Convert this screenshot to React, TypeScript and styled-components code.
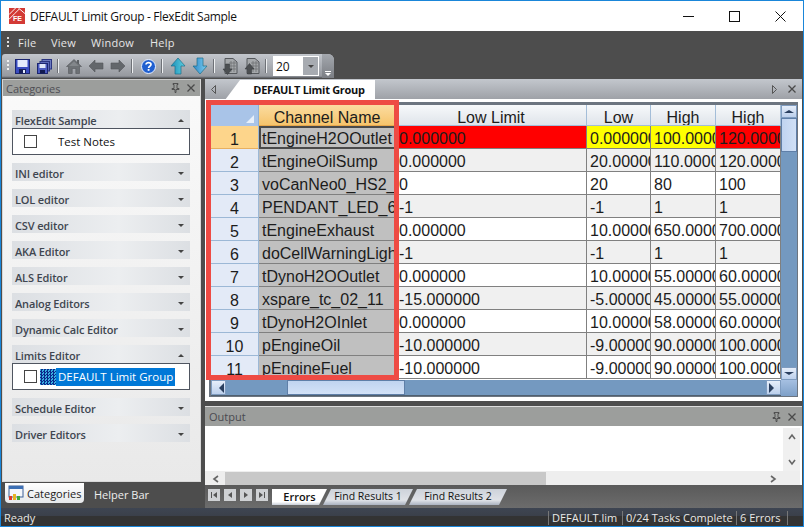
import React from "react";
import styled, { createGlobalStyle } from "styled-components";

const Global = createGlobalStyle`
  * { box-sizing: border-box; }
  html, body { margin: 0; padding: 0; background: #4d4d4d; }
`;
const ui = `"Open Sans", "Noto Sans", sans-serif`;
const gridFont = `"Liberation Sans", Arial, sans-serif`;

const Window = styled.div`
  width: 804px; height: 527px; border: 1px solid #1a86d9; display: flex; flex-direction: column;
  background: #4d4d4d; overflow: hidden; font-family: ${ui};
`;
const TitleBar = styled.div`
  height: 30px; background: #fff; display: flex; align-items: center; padding-left: 8px; flex: none;
`;
const TitleText = styled.div`font-size: 12px; color: #111; margin-left: 5px; flex: 1; letter-spacing: -0.32px;`;
const WinButton = styled.div`width: 46px; height: 30px; display: flex; align-items: center; justify-content: center;`;

const MenuBar = styled.div`
  height: 23px; display: flex; align-items: center; padding-left: 4px; color: #e6e6e6; font-size: 11px; flex: none; letter-spacing: 0.25px;
`;
const Grip = styled.div<{ $c?: string }>`
  width: 2px; height: 12px; margin: 0 ${p => (p.$c ? "2px" : "2px")} 0 2px;
  background: repeating-linear-gradient(${p => p.$c || "#ddd"} 0 2px, transparent 2px 4px);
`;
const MenuItem = styled.div<{ $w: number }>`width: ${p => p.$w}px; padding-left: 7px;`;

const Toolbar = styled.div`
  width: 332px; height: 24px; margin-left: 1px; border-radius: 3px 6px 0 0; display: flex; align-items: center;
  padding-left: 3px; flex: none; background: linear-gradient(#c2c6cc, #96999f 92%, #55585e); position: relative;
`;
const ToolButton = styled.div`width: 22px; height: 20px; display: flex; align-items: center; justify-content: center;`;
const Sep = styled.div`width: 1px; height: 14px; background: #eef0f2; box-shadow: -1px 0 0 #6e7177; margin: 0 4px 0 3px;`;
const Combo = styled.div`
  width: 46px; height: 20px; margin-left: 2px; background: #fff; display: flex; font: 12px ${ui}; color: #111;
  align-items: center; padding-left: 3px; justify-content: space-between;
`;
const ComboBtn = styled.div`width: 15px; height: 18px; margin-right: 1px; background: #a7abb1; display: flex; align-items: center; justify-content: center;`;
const Tri = styled.div<{ $dir?: string; $c?: string; $s?: number }>`
  width: 0; height: 0; flex: none;
  border-left: ${p => p.$s ?? 3}px solid ${p => (p.$dir === "r" ? p.$c || "#444" : "transparent")};
  border-right: ${p => p.$s ?? 3}px solid ${p => (p.$dir === "l" ? p.$c || "#444" : "transparent")};
  border-top: ${p => (p.$dir === "u" ? 0 : p.$dir === "d" ? 3 : p.$s ?? 3)}px solid ${p => (p.$dir === "d" ? p.$c || "#444" : "transparent")};
  border-bottom: ${p => (p.$dir === "d" ? 0 : p.$dir === "u" ? 3 : p.$s ?? 3)}px solid ${p => (p.$dir === "u" ? p.$c || "#444" : "transparent")};
`;
const ToolEnd = styled.div`
  margin-left: auto; width: 12px; height: 24px; background: linear-gradient(#a4a8ae, #7b7e84); border-radius: 0 6px 0 0;
  display: flex; flex-direction: column; align-items: center; justify-content: flex-end; padding-bottom: 2px; gap: 1px;
`;
const EndLine = styled.div`width: 6px; height: 1px; background: #fff;`;

const Main = styled.div`flex: 1; display: flex; min-height: 0; padding-top: 1px;`;
const LeftCol = styled.div`width: 204px; flex: none; display: flex; flex-direction: column; padding-left: 1px;`;
const Panel = styled.div`
  width: 199px; height: 403px; display: flex; flex-direction: column; border: 1px solid #d8d8d8; border-top-color: #c8c8c8;
  background: linear-gradient(#fafafa, #e9e9e9);
`;
const PanelHead = styled.div`
  height: 16px; background: #9c9e9c; display: flex; align-items: center; font-size: 11px; color: #4f4f55;
  padding: 0 1px 0 3px; flex: none;
`;
const HeadLabel = styled.div`flex: 1;`;
const HeadIcon = styled.div`width: 16px; display: flex; justify-content: center; align-items: center;`;
const Sections = styled.div`padding: 14px 10px 0 9px; display: flex; flex-direction: column; gap: 8px;`;
const Section = styled.div``;
const SectionHead = styled.div`
  height: 18px; display: flex; align-items: center; justify-content: space-between; padding: 3px 6px 0 3px;
  background: linear-gradient(90deg, #dcdfe3, #eceef0 60%, #dcdfe3); font: 600 11px ${ui}; color: #3f4650; letter-spacing: -0.15px;
`;
const SectionBox = styled.div`
  height: 27px; background: #fff; border: 1px solid #4f5560; display: flex; align-items: center; padding-left: 11px;
  font-size: 11.5px; color: #111;
`;
const CheckBox = styled.div`width: 13px; height: 13px; border: 1px solid #444; background: #fff; flex: none;`;
const Plain = styled.div`margin-left: 21px;`;
const Selected = styled.div`background: #0078d7; color: #fff; padding: 0 2px 0 2px; height: 18px; line-height: 18px; white-space: nowrap;`;
const Checker = styled.div`
  width: 16px; height: 16px; flex: none; margin-left: 3px;
  background: repeating-conic-gradient(#0b2a8c 0 25%, #39b0e0 0 50%) 0 0 / 3px 3px;
`;
const LeftTabs = styled.div`height: 24px; display: flex; align-items: center; padding-left: 3px; font-size: 11px; color: #eee;`;
const LeftTabOn = styled.div`
  width: 79px; height: 20px; background: linear-gradient(#fff, #e6e8ea); color: #222; display: flex; align-items: center; gap: 3px;
  padding-left: 3px; border-radius: 0 0 4px 4px; margin-right: 10px; margin-top: -2px;
`;

const RightCol = styled.div`width: 597px; flex: none; display: flex; flex-direction: column;`;
const Doc = styled.div`height: 322px; flex: none; background: #fff; position: relative; display: flex; flex-direction: column;`;
const TabStrip = styled.div`
  height: 20px; flex: none; background: linear-gradient(#c3c7cd, #9ea1a7); display: flex; align-items: center; position: relative; padding-left: 6px;
`;
const DocTab = styled.div`
  position: absolute; left: 20px; bottom: -1px; width: 150px; height: 20px; background: #fff; display: flex; align-items: center; justify-content: center;
  padding: 0 0 2px 18px; font: 700 11px ${ui}; color: #111; letter-spacing: -0.3px; clip-path: polygon(0 100%, 15px 0, 100% 0, 100% 100%);
`;
const StripRight = styled.div`margin-left: auto; display: flex; align-items: center; gap: 11px; padding-right: 6px;`;
const Frame = styled.div`
  margin: 3px 4px 0 4px; width: 589px; height: 295px; border: 2px solid #6c7580; border-top-width: 3px; border-bottom-width: 1px; border-right-width: 1px;
  display: grid; grid-template-columns: 570px 16px; grid-template-rows: 275px 16px; background: #fff;
`;
const Table = styled.div`
  display: grid; grid-template-columns: 48px 137px 191px 64px 65px 65px; grid-template-rows: 21px repeat(11, 23px);
  overflow: hidden; font-family: ${gridFont}; font-size: 16px; color: #1c1c1c;
`;
const Corner = styled.div`
  background: #a9c4e8; border-right: 1px solid #8fb0d4; position: relative;
  &::after { content: ""; position: absolute; right: 4px; bottom: 3px; border-left: 8px solid transparent; border-bottom: 8px solid #e8f0fa; }
`;
const ColHead = styled.div<{ $on?: boolean }>`
  background: ${p => (p.$on ? "linear-gradient(#fbdca0, #f6c46c)" : "linear-gradient(#f7f9fb, #dfe4ea)")};
  border-right: 1px solid #a3bdd8; border-bottom: 1px solid ${p => (p.$on ? "#e8a84c" : "#a3bdd8")};
  display: flex; align-items: center; justify-content: center; white-space: nowrap; overflow: hidden; padding-top: 5px;
`;
const RowHead = styled.div<{ $on?: boolean }>`
  background: ${p => (p.$on ? "#fdd58b" : "#e3eaf7")}; border-right: 1px solid #9cb8d6; border-bottom: 1px solid ${p => (p.$on ? "#e8b060" : "#9cb8d6")};
  display: flex; align-items: center; justify-content: center; padding-top: 6px;
`;
const Cell = styled.div<{ $bg: string; $active?: boolean }>`
  background: ${p => p.$bg}; border-right: 1px solid #808080; border-bottom: 1px solid #808080;
  padding-left: ${p => (p.$active ? "1px" : "3px")}; white-space: nowrap; overflow: hidden; line-height: 26px;
  ${p => p.$active ? "border: 2px solid #4a4a4a; border-right-width: 1px; line-height: 22px;" : ""}
`;
const VBar = styled.div`
  background: #7499c0; display: flex; flex-direction: column; justify-content: space-between; position: relative;
`;
const SBtn = styled.div`
  height: 13px; background: linear-gradient(#e6eefa, #bcd0ec); border: 1px solid #7f9cc0; display: flex; align-items: center; justify-content: center; flex: none;
`;
const VThumb = styled.div`
  position: absolute; left: 0; right: 0; top: 13px; height: 34px; background: linear-gradient(90deg, #c0d4f0, #d0e0f6);
  border: 1px solid #5f7fa8;
`;
const HBar = styled.div`background: #7499c0; display: flex; justify-content: space-between; position: relative; border-bottom: 1px solid #4f6070;`;
const HBtn = styled.div`
  width: 15px; background: linear-gradient(#e6eefa, #bcd0ec); border: 1px solid #7f9cc0; display: flex; align-items: center; justify-content: center; flex: none;
`;
const HThumb = styled.div`
  position: absolute; left: 76px; width: 118px; top: 0; bottom: 0; background: linear-gradient(#c0d4f0, #d3e2f7); border: 1px solid #5f7fa8;
`;
const GridCorner = styled.div`background: linear-gradient(#a6c0e2, #7ea0c8);`;
const RedBox = styled.div`
  position: absolute; left: 1px; top: 21px; width: 193px; height: 280px; border: 5px solid #ee4b44; pointer-events: none;
`;

const Gap = styled.div`height: 5px; flex: none;`;
const Output = styled.div`height: 79px; flex: none; background: #fff; display: flex; flex-direction: column; border-top: 1px solid #ddd;`;
const OutHead = styled(PanelHead)`height: 19px; padding: 0 2px 0 4px; font-size: 11px; color: #4a4a50;`;
const OutBody = styled.div`
  flex: 1; display: grid; grid-template-columns: 578px 17px; grid-template-rows: 43px 16px; padding-top: 2px;
`;
const OutMain = styled.div`background: #fff;`;
const OutV = styled.div`background: #f0f0f0; display: flex; flex-direction: column; justify-content: space-between; align-items: center; padding: 5px 0;`;
const OutH = styled.div`background: #eee; display: flex; align-items: center; padding-left: 7px; gap: 5px; grid-column: 1 / 3; padding-right: 23px;`;
const OutThumb = styled.div`width: 321px; height: 15px; background: #c8c8c8;`;
const OutFill = styled.div`flex: 1;`;
const BotTabs = styled.div`
  flex: 1; display: flex; align-items: flex-start; padding: 4px 0 0 3px; background: linear-gradient(#5a5a5a, #6c6c6c);
`;
const NavBtn = styled.div`
  width: 12px; height: 12px; margin-right: 4px; background: #cfd1d4; display: flex; align-items: center; justify-content: center; flex: none;
`;
const BotTab = styled.div<{ $on?: boolean; $w: number }>`
  width: ${p => p.$w}px; height: 16px; margin-right: -4px; display: flex; align-items: center; justify-content: center; color: #111; padding-bottom: 2px;
  font-size: ${p => (p.$on ? "11px" : "10.5px")};
  font-weight: ${p => (p.$on ? 600 : 400)};
  background: ${p => (p.$on ? "linear-gradient(#fff 80%, #c6ccd6)" : "linear-gradient(#cdd2da, #dfe2e7 70%, #aab2c0)")};
  clip-path: polygon(0 100%, ${p => (p.$on ? "0 0" : "8px 0")}, 100% 0, calc(100% - 8px) 100%);
`;
const Status = styled.div`
  height: 18px; flex: none; display: flex; align-items: center; color: #e8e8e8; font-size: 11px; padding-left: 3px;
  background: linear-gradient(#3e4552, #3b404a 8px, #333 8px);
`;
const StatusLabel = styled.div`flex: 1;`;
const StatusPane = styled.div<{ $w: number }>`
  width: ${p => p.$w}px; border-left: 1px solid #777; height: 14px; line-height: 14px; padding-left: 3px; white-space: nowrap; margin-top: 2px;
`;

const rows: [string, string, string, string, string][] = [
  ["tEngineH2OOutlet", "0.000000", "0.000000", "100.000000", "120.000000"],
  ["tEngineOilSump", "0.000000", "20.000000", "110.000000", "120.000000"],
  ["voCanNeo0_HS2_Status", "0", "20", "80", "100"],
  ["PENDANT_LED_6", "-1", "-1", "1", "1"],
  ["tEngineExhaust", "0.000000", "10.000000", "650.000000", "700.000000"],
  ["doCellWarningLight", "-1", "-1", "1", "1"],
  ["tDynoH2OOutlet", "0.000000", "10.000000", "55.000000", "60.000000"],
  ["xspare_tc_02_11", "-15.000000", "-5.000000", "45.000000", "55.000000"],
  ["tDynoH2OInlet", "0.000000", "10.000000", "58.000000", "60.000000"],
  ["pEngineOil", "-10.000000", "-9.000000", "90.000000", "100.000000"],
  ["pEngineFuel", "-10.000000", "-9.000000", "90.000000", "100.000000"],
];
const sections1 = ["INI editor", "LOL editor", "CSV editor", "AKA Editor", "ALS Editor", "Analog Editors", "Dynamic Calc Editor"];

const Arrow = ({ up, a, b }: { up?: boolean; a: string; b: string }) => (
  <svg width="16" height="18" viewBox="0 0 16 18">
    <defs><linearGradient id={up ? "au" : "ad"} x1="0" x2="1"><stop offset="0" stopColor={a} /><stop offset="1" stopColor={b} /></linearGradient></defs>
    <path transform={up ? undefined : "rotate(180 8 9)"} d="M8 1 L15 9 L11 9 L11 17 L5 17 L5 9 L1 9 Z" fill={`url(#${up ? "au" : "ad"})`} stroke="#1d6d8a" strokeWidth="0.7" />
  </svg>
);
const GrayArrow = ({ left }: { left?: boolean }) => (
  <svg width="16" height="14" viewBox="0 0 16 14">
    <path transform={left ? undefined : "rotate(180 8 7)"} d="M1 7 L7 1 L7 4 L15 4 L15 10 L7 10 L7 13 Z" fill="#63676b" stroke="#55585c" strokeWidth="0.6" />
  </svg>
);
const Floppy = () => (
  <svg width="15" height="15" viewBox="0 0 15 15">
    <rect x="0.5" y="0.5" width="14" height="14" fill="#3a4cc0" stroke="#1c2670" />
    <rect x="2.5" y="1" width="10" height="7" fill="#e4ebfc" />
    <rect x="4" y="10" width="7" height="4.5" fill="#161f58" />
    <rect x="8" y="11" width="2" height="3" fill="#e4ebfc" />
  </svg>
);
const FloppyAll = () => (
  <svg width="15" height="15" viewBox="0 0 15 15">
    <rect x="5" y="0.5" width="9.5" height="9.5" fill="#6c7ac0" stroke="#2a3480" />
    <rect x="3" y="2.5" width="9.5" height="9.5" fill="#5a68b8" stroke="#2a3480" />
    <rect x="0.5" y="4.5" width="10" height="10" fill="#4a5ac0" stroke="#1c2670" />
    <rect x="2.5" y="5" width="6" height="4" fill="#dfe6fa" />
    <rect x="3" y="11" width="5" height="3.5" fill="#111a50" />
  </svg>
);
const Home = () => (
  <svg width="16" height="15" viewBox="0 0 16 15">
    <rect x="11" y="1" width="2" height="4" fill="#5d6165" />
    <path d="M8 0.5 L15.5 7.5 L13.5 7.5 L13.5 14.5 L9.8 14.5 L9.8 9.5 L6.2 9.5 L6.2 14.5 L2.5 14.5 L2.5 7.5 L0.5 7.5 Z" fill="#6d7175" stroke="#55585c" strokeWidth="0.6" />
    <path d="M8 2.5 L13 7 L3 7 Z" fill="#83878b" />
  </svg>
);
const Help = () => (
  <svg width="15" height="15" viewBox="0 0 15 15">
    <circle cx="7.5" cy="7.5" r="7" fill="#1f5fd0" stroke="#e6eeff" strokeWidth="1" />
    <path d="M5 5.6 C5 2.9 10 2.9 10 5.6 C10 7.4 7.6 7.2 7.6 9" fill="none" stroke="#fff" strokeWidth="1.7" />
    <rect x="6.7" y="10" width="1.8" height="1.8" fill="#fff" />
  </svg>
);
const DocArrow = ({ up }: { up?: boolean }) => (
  <svg width="16" height="17" viewBox="0 0 16 17">
    <path d="M3 0.5 L11 0.5 L15 4 L15 15.5 L3 15.5 Z" fill="#a5a8ab" stroke="#55585c" />
    <path d="M7 5 H14 M7 8 H14 M7 11 H14 M9 3 V14 M12 3 V14" stroke="#6e7175" strokeWidth="0.8" />
    <path transform={up ? "rotate(180 5.5 11)" : undefined} d="M3.5 6 H7.5 V11 H10 L5.5 16.5 L1 11 H3.5 Z" fill="#4c4f52" stroke="#33363a" strokeWidth="0.5" />
  </svg>
);
const Pin = ({ c = "#4a4a4a" }: { c?: string }) => (
  <svg width="9" height="10" viewBox="0 0 9 10"><path d="M2 0.5 H7 V1.5 H6 V5.5 H8 V6.5 H5 V9.5 H4 V6.5 H1 V5.5 H3 V1.5 H2 Z" fill="none" stroke={c} strokeWidth="0.9" /></svg>
);
const Close = ({ c = "#4a4a4a", s = 8 }: { c?: string; s?: number }) => (
  <svg width={s} height={s} viewBox="0 0 8 8"><path d="M0.5 0.5 L7.5 7.5 M7.5 0.5 L0.5 7.5" stroke={c} strokeWidth="1.3" /></svg>
);
const StripArrow = ({ left }: { left?: boolean }) => (
  <svg width="5" height="9" viewBox="0 0 5 9"><path d={left ? "M4.5 0.5 L0.5 4.5 L4.5 8.5 Z" : "M0.5 0.5 L4.5 4.5 L0.5 8.5 Z"} fill="none" stroke="#555" /></svg>
);
const Chevron = ({ d }: { d: string }) => (
  <svg width="8" height="8" viewBox="0 0 8 8"><path d={d} fill="none" stroke="#666" strokeWidth="1.6" /></svg>
);
const NavGlyph = ({ d }: { d: string }) => (
  <svg width="8" height="8" viewBox="0 0 8 8"><path d={d} fill="#555" /></svg>
);
const Logo = () => (
  <svg width="16" height="16" viewBox="0 0 17 17">
    <rect width="17" height="17" fill="#d33a35" />
    <path d="M0 7 L7 0 M0 12 L6 6 L11 1 M10 0 L17 6" stroke="#fff" strokeWidth="1" fill="none" />
    <text x="9" y="14" fontSize="7.5" fontWeight="700" fill="#fff" textAnchor="middle" fontFamily="Liberation Sans">FE</text>
  </svg>
);
const ChartIcon = () => (
  <svg width="16" height="16" viewBox="0 0 16 16">
    <rect x="1" y="1" width="14" height="11" fill="#f4f6fa" stroke="#3c5f96" />
    <rect x="1" y="1" width="14" height="3" fill="#3c6fb4" />
    <rect x="1" y="11" width="3" height="4" fill="#d93a2b" />
    <rect x="5" y="9" width="3" height="6" fill="#e6b422" />
    <rect x="9" y="11" width="3" height="4" fill="#3ea83a" />
  </svg>
);

export default function App() {
  return (
    <Window>
      <Global />
      <TitleBar>
        <Logo />
        <TitleText>DEFAULT Limit Group - FlexEdit Sample</TitleText>
        <WinButton><svg width="11" height="11" viewBox="0 0 11 11"><path d="M0 5.5 H11" stroke="#111" /></svg></WinButton>
        <WinButton><svg width="11" height="11" viewBox="0 0 11 11"><rect x="0.5" y="0.5" width="10" height="10" fill="none" stroke="#111" /></svg></WinButton>
        <WinButton><svg width="11" height="11" viewBox="0 0 11 11"><path d="M0.5 0.5 L10.5 10.5 M10.5 0.5 L0.5 10.5" stroke="#111" /></svg></WinButton>
      </TitleBar>
      <MenuBar>
        <Grip />
        <MenuItem $w={33}>File</MenuItem>
        <MenuItem $w={40}>View</MenuItem>
        <MenuItem $w={59}>Window</MenuItem>
        <MenuItem $w={50}>Help</MenuItem>
      </MenuBar>
      <Toolbar>
        <Grip $c="#f0f0f0" />
        <ToolButton><Floppy /></ToolButton>
        <ToolButton><FloppyAll /></ToolButton>
        <Sep />
        <ToolButton><Home /></ToolButton>
        <ToolButton><GrayArrow left /></ToolButton>
        <ToolButton><GrayArrow /></ToolButton>
        <Sep />
        <ToolButton><Help /></ToolButton>
        <Sep />
        <ToolButton><Arrow up a="#1a8fb8" b="#5fd0e0" /></ToolButton>
        <ToolButton><Arrow a="#7fd0f0" b="#2a86c8" /></ToolButton>
        <Sep />
        <ToolButton><DocArrow /></ToolButton>
        <ToolButton><DocArrow up /></ToolButton>
        <Sep />
        <Combo>20<ComboBtn><Tri $dir="d" $c="#444" /></ComboBtn></Combo>
        <ToolEnd><EndLine /><Tri $dir="d" $c="#fff" /></ToolEnd>
      </Toolbar>
      <Main>
        <LeftCol>
          <Panel>
            <PanelHead>
              <HeadLabel>Categories</HeadLabel>
              <HeadIcon><Pin /></HeadIcon>
              <HeadIcon><Close /></HeadIcon>
            </PanelHead>
            <Sections>
              <Section>
                <SectionHead>FlexEdit Sample<Tri $dir="u" /></SectionHead>
                <SectionBox><CheckBox /><Plain>Test Notes</Plain></SectionBox>
              </Section>
              {sections1.map(s => <SectionHead key={s}>{s}<Tri $dir="d" /></SectionHead>)}
              <Section>
                <SectionHead>Limits Editor<Tri $dir="u" /></SectionHead>
                <SectionBox><CheckBox /><Checker /><Selected>DEFAULT Limit Group</Selected></SectionBox>
              </Section>
              <SectionHead>Schedule Editor<Tri $dir="d" /></SectionHead>
              <SectionHead>Driver Editors<Tri $dir="d" /></SectionHead>
            </Sections>
          </Panel>
          <LeftTabs>
            <LeftTabOn><ChartIcon />Categories</LeftTabOn>
            Helper Bar
          </LeftTabs>
        </LeftCol>
        <RightCol>
          <Doc>
            <TabStrip>
              <StripArrow left />
              <DocTab>DEFAULT Limit Group</DocTab>
              <StripRight><StripArrow /><Close /></StripRight>
            </TabStrip>
            <Frame>
              <Table>
                <Corner />
                <ColHead $on>Channel Name</ColHead>
                <ColHead>Low Limit</ColHead>
                <ColHead>Low</ColHead>
                <ColHead>High</ColHead>
                <ColHead>High</ColHead>
                {rows.map((r, i) => {
                  const base = i % 2 === 0 ? "#ffffff" : "#f0f0f0";
                  const first = i === 0;
                  return (
                    <React.Fragment key={i}>
                      <RowHead $on={first}>{i + 1}</RowHead>
                      <Cell $bg="#c0c0c0" $active={first}>{r[0]}</Cell>
                      <Cell $bg={first ? "#ff0000" : base}>{r[1]}</Cell>
                      <Cell $bg={first ? "#ffff00" : base}>{r[2]}</Cell>
                      <Cell $bg={first ? "#ffff00" : base}>{r[3]}</Cell>
                      <Cell $bg={first ? "#ff0000" : base}>{r[4]}</Cell>
                    </React.Fragment>
                  );
                })}
              </Table>
              <VBar>
                <SBtn><Tri $dir="u" $c="#2a3f5f" $s={5} /></SBtn>
                <VThumb />
                <SBtn><Tri $dir="d" $c="#2a3f5f" $s={5} /></SBtn>
              </VBar>
              <HBar>
                <HBtn><Tri $dir="l" $c="#2a3f5f" $s={5} /></HBtn>
                <HThumb />
                <HBtn><Tri $dir="r" $c="#2a3f5f" $s={5} /></HBtn>
              </HBar>
              <GridCorner />
            </Frame>
            <RedBox />
          </Doc>
          <Gap />
          <Output>
            <OutHead>
              <HeadLabel>Output</HeadLabel>
              <HeadIcon><Pin /></HeadIcon>
              <HeadIcon><Close /></HeadIcon>
            </OutHead>
            <OutBody>
              <OutMain />
              <OutV><Chevron d="M1 6 L4 2 L7 6" /><Chevron d="M1 2 L4 6 L7 2" /></OutV>
              <OutH>
                <Chevron d="M6 1 L2 4 L6 7" />
                <OutThumb />
                <OutFill />
                <Chevron d="M2 1 L6 4 L2 7" />
              </OutH>
            </OutBody>
          </Output>
          <BotTabs>
            <NavBtn><NavGlyph d="M1 1 H2 V7 H1 Z M7 1 V7 L3 4 Z" /></NavBtn>
            <NavBtn><NavGlyph d="M6 1 V7 L2 4 Z" /></NavBtn>
            <NavBtn><NavGlyph d="M2 1 V7 L6 4 Z" /></NavBtn>
            <NavBtn><NavGlyph d="M1 1 V7 L5 4 Z M6 1 H7 V7 H6 Z" /></NavBtn>
            <BotTab $on $w={55}>Errors</BotTab>
            <BotTab $w={90}>Find Results 1</BotTab>
            <BotTab $w={98}>Find Results 2</BotTab>
          </BotTabs>
        </RightCol>
      </Main>
      <Status>
        <StatusLabel>Ready</StatusLabel>
        <StatusPane $w={74}>DEFAULT.lim</StatusPane>
        <StatusPane $w={114}>0/24 Tasks Complete</StatusPane>
        <StatusPane $w={51}>6 Errors</StatusPane>
        <StatusPane $w={16} />
      </Status>
    </Window>
  );
}
